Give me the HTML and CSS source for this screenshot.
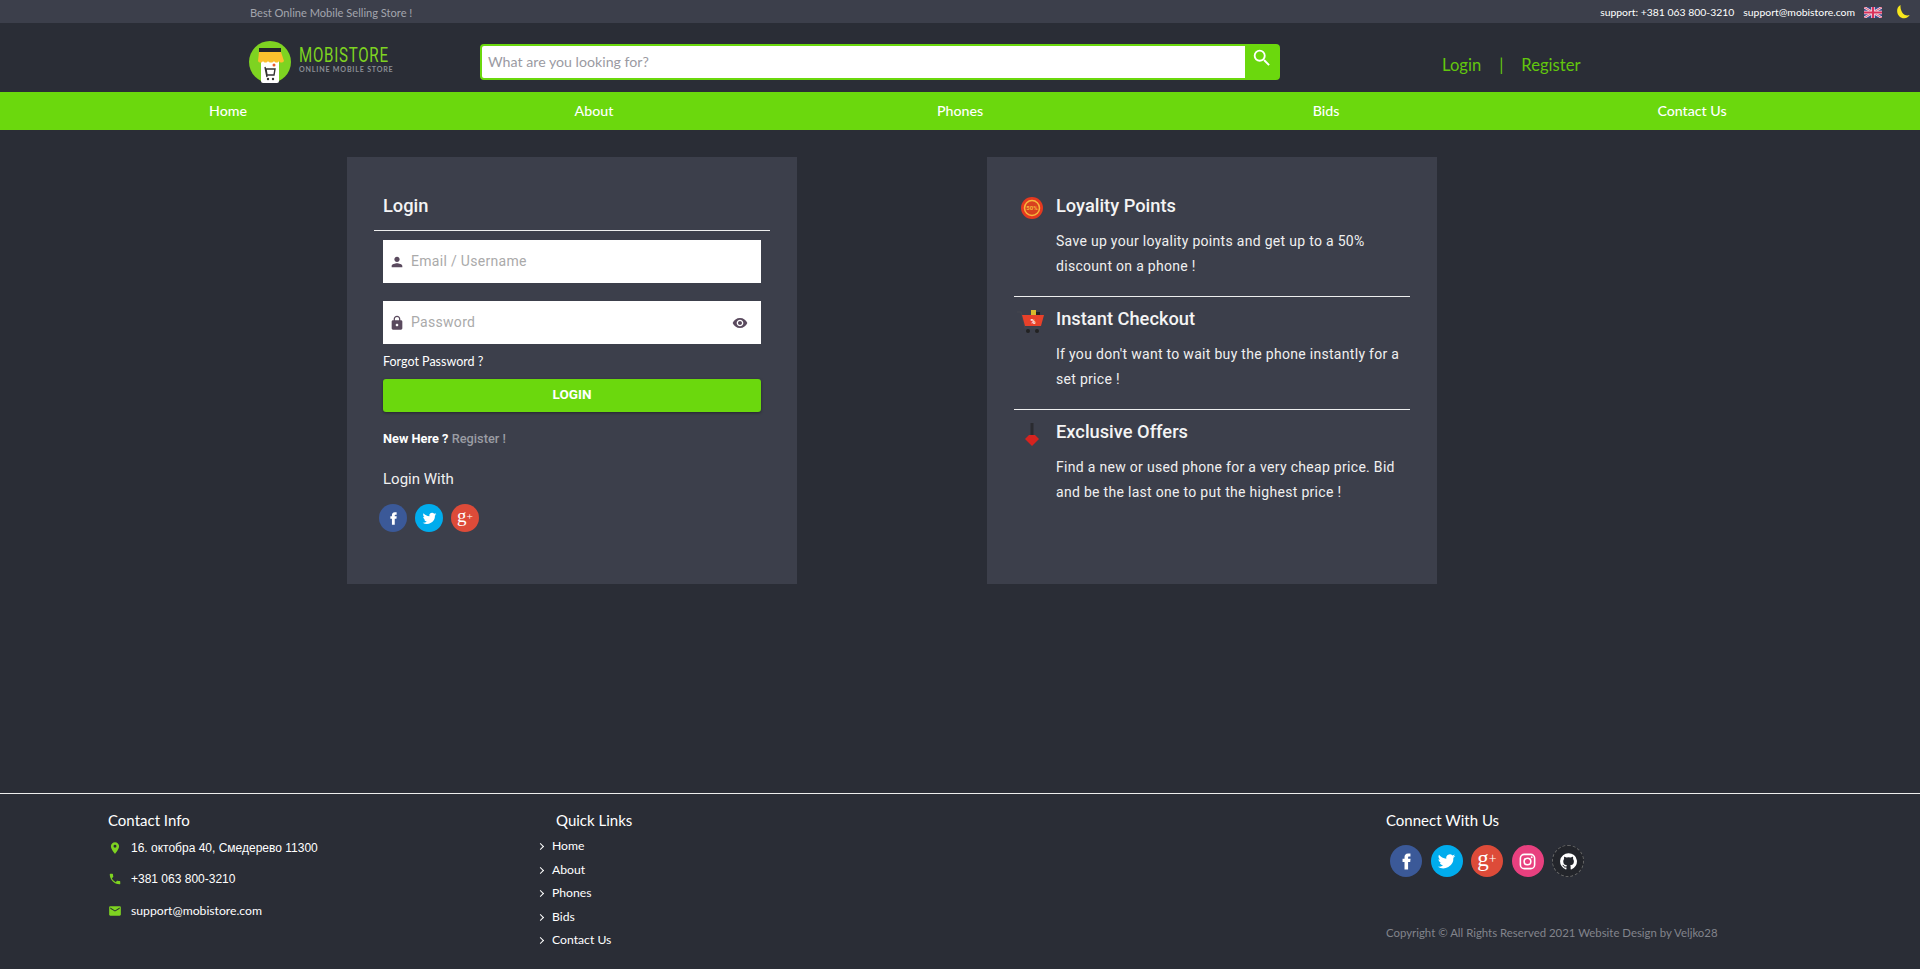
FILE: index.html
```html
<!DOCTYPE html>
<html lang="en">
<head>
    <meta charset="UTF-8">
    <meta name="viewport" content="width=device-width, initial-scale=1.0">
    <title>MobiStore - Login</title>
    <link rel="stylesheet" href="styles.css">
</head>
<body>
    <div class="topbar">
        <span class="topbar-slogan">Best Online Mobile Selling Store !</span>
        <div class="topbar-right">
            <span>support: +381 063 800-3210</span>
            <span>support@mobistore.com</span>
            <svg class="flag" viewBox="0 0 60 36" width="18" height="11">
                <rect width="60" height="36" fill="#3a4a8c"/>
                <path d="M0 0L60 36M60 0L0 36" stroke="#f3dce6" stroke-width="8"/>
                <path d="M0 0L60 36M60 0L0 36" stroke="#d9486b" stroke-width="3"/>
                <path d="M30 0V36M0 18H60" stroke="#f3dce6" stroke-width="12"/>
                <path d="M30 0V36M0 18H60" stroke="#d9305a" stroke-width="7"/>
            </svg>
            <svg class="moon" viewBox="0 0 16 16" width="16" height="16">
                <path d="M5.500 1C3 2.300 1.800 5 2.200 8c.5 3.700 3.600 6.500 7.200 6.300 2.300-.1 4.200-1.300 5.300-3.200-3 1-6-.2-7.500-2.700C5.700 6 5.300 3.300 5.500 1z" fill="#f8e71c"/>
            </svg>
        </div>
    </div>

    <header class="header">
        <a class="logo" href="#">
            <svg class="logo-mark" viewBox="0 0 42 42" width="42" height="42">
                <circle cx="21" cy="21" r="21" fill="#7ed321"/>
                <rect x="12" y="16" width="18" height="26" rx="2" fill="#fff"/>
                <rect x="10" y="7" width="22" height="4" fill="#23232b"/>
                <path d="M10 11h22l3 9c-1.500 2-4 2-5 0-1 2-4 2-5 0-1 2-5 2-6 0-1 2-4 2-5 0-1 2-4 2-5 0z" fill="#fbc02d"/>
                <path d="M17 28h9l-1 6h-7zM16 26l2 10" fill="none" stroke="#333" stroke-width="1.400"/>
                <circle cx="19" cy="38" r="1.200" fill="#333"/>
                <circle cx="24" cy="38" r="1.200" fill="#333"/>
                <circle cx="25" cy="24" r="1.500" fill="#e85c2c"/>
            </svg>
            <div class="logo-text">
                <span class="logo-name">MOBISTORE</span>
                <span class="logo-sub">ONLINE MOBILE STORE</span>
            </div>
        </a>
        <form class="search">
            <input class="search-input" type="text" placeholder="What are you looking for?">
            <button class="search-btn" type="button">
                <svg viewBox="0 0 24 24" width="22" height="22"><path d="M15.500 14h-.790l-.280-.270A6.470 6.470 0 0 0 16 9.500 6.500 6.500 0 1 0 9.500 16c1.610 0 3.090-.590 4.230-1.570l.270.280v.790l5 4.990L20.490 19l-4.990-5zm-6 0C7.010 14 5 11.990 5 9.500S7.010 5 9.500 5 14 7.010 14 9.500 11.990 14 9.500 14z" fill="#fff"/></svg>
            </button>
        </form>
        <div class="auth-links">
            <a href="#">Login</a>
            <span>|</span>
            <a href="#">Register</a>
        </div>
    </header>

    <nav class="nav">
        <a href="#">Home</a>
        <a href="#">About</a>
        <a href="#">Phones</a>
        <a href="#">Bids</a>
        <a href="#">Contact Us</a>
    </nav>

    <main class="main">
        <section class="card">
            <h2 class="card-title login-title">Login</h2>
            <hr class="line">
            <div class="field">
                <svg class="field-icon" viewBox="0 0 24 24"><path d="M12 12c2.210 0 4-1.790 4-4s-1.790-4-4-4-4 1.790-4 4 1.790 4 4 4zm0 2c-2.670 0-8 1.340-8 4v2h16v-2c0-2.660-5.330-4-8-4z"/></svg>
                <input type="text" placeholder="Email / Username">
            </div>
            <div class="field">
                <svg class="field-icon" viewBox="0 0 24 24"><path d="M18 8h-1V6c0-2.760-2.240-5-5-5S7 3.240 7 6v2H6c-1.100 0-2 .9-2 2v10c0 1.100.9 2 2 2h12c1.100 0 2-.9 2-2V10c0-1.100-.9-2-2-2zm-6 9c-1.100 0-2-.9-2-2s.9-2 2-2 2 .9 2 2-.9 2-2 2zm3.100-9H8.900V6c0-1.710 1.390-3.100 3.100-3.100s3.100 1.390 3.100 3.100v2z"/></svg>
                <input type="password" placeholder="Password">
                <svg class="field-icon" viewBox="0 0 24 24"><path d="M12 4.500C7 4.500 2.730 7.610 1 12c1.730 4.390 6 7.500 11 7.500s9.270-3.110 11-7.500c-1.730-4.390-6-7.500-11-7.500zM12 17c-2.760 0-5-2.240-5-5s2.240-5 5-5 5 2.240 5 5-2.240 5-5 5zm0-8c-1.660 0-3 1.340-3 3s1.340 3 3 3 3-1.340 3-3-1.340-3-3-3z"/></svg>
            </div>
            <a class="forgot" href="#">Forgot Password ?</a>
            <button class="login-btn" type="button">LOGIN</button>
            <p class="new-here"><b>New Here ?</b> <a href="#">Register !</a></p>
            <p class="login-with">Login With</p>
            <div class="socials small">
                <a class="fb" href="#"><svg viewBox="0 0 24 24"><path d="M14 8.500V6.800c0-.8.5-1 .9-1H17V2h-3c-3.300 0-4.500 2.400-4.500 4.500v2H7v4h2.500V22H14v-9.500h2.700l.4-4z"/></svg></a>
                <a class="tw" href="#"><svg viewBox="0 0 24 24"><path d="M23 5c-.8.4-1.700.6-2.600.7.900-.6 1.600-1.400 2-2.500-.9.500-1.800.9-2.900 1.100A4.500 4.500 0 0 0 11.800 8.400C8 8.200 4.700 6.400 2.500 3.600c-1.200 2.100-.6 4.700 1.400 6-.7 0-1.400-.2-2-.6 0 2.200 1.500 4 3.600 4.500-.7.200-1.400.2-2 .1.600 1.800 2.200 3.100 4.200 3.100A9.100 9.100 0 0 1 1 18.600 12.800 12.800 0 0 0 20.700 7.200c.9-.6 1.700-1.400 2.300-2.200z"/></svg></a>
                <a class="gp" href="#">g<i>+</i></a>
            </div>
        </section>

        <section class="card">
            <div class="perk">
                <svg class="perk-icon" viewBox="0 0 28 28">
                    <circle cx="13" cy="13" r="11" fill="#e5391f"/>
                    <circle cx="13" cy="13" r="7.500" fill="#d8401f" stroke="#f6b73c" stroke-width="1.500"/>
                    <text x="13" y="15" text-anchor="middle" font-size="6" font-weight="700" fill="#f6b73c" font-family="Roboto, sans-serif">50%</text>
                </svg>
                <div class="perk-body">
                    <h2 class="card-title">Loyality Points</h2>
                    <p>Save up your loyality points and get up to a 50% discount on a phone !</p>
                </div>
            </div>
            <hr class="line">
            <div class="perk">
                <svg class="perk-icon" viewBox="0 0 28 28">
                    <g transform="translate(-2 2)">
                        <path d="M0 2h4l4 16h15" fill="none" stroke="#44464f" stroke-width="1.200"/>
                        <rect x="14" y="0" width="5" height="6" fill="#d8b92c"/>
                        <rect x="19" y="2" width="4" height="4" fill="#222"/>
                        <path d="M5 5h22l-3 11H8z" fill="#e8412a"/>
                        <text x="16" y="14" text-anchor="middle" font-size="7" font-weight="700" fill="#fff" font-family="Roboto, sans-serif">%</text>
                        <circle cx="11" cy="21" r="2" fill="#222"/>
                        <circle cx="20" cy="21" r="2" fill="#222"/>
                    </g>
                </svg>
                <div class="perk-body">
                    <h2 class="card-title">Instant Checkout</h2>
                    <p>If you don't want to wait buy the phone instantly for a set price !</p>
                </div>
            </div>
            <hr class="line">
            <div class="perk">
                <svg class="perk-icon" viewBox="0 0 28 28">
                    <path d="M13 2v12" stroke="#2a2b30" stroke-width="3"/>
                    <path d="M6 18l4-4h6l4 4-7 7z" fill="#d6231f"/>
                </svg>
                <div class="perk-body">
                    <h2 class="card-title">Exclusive Offers</h2>
                    <p>Find a new or used phone for a very cheap price. Bid and be the last one to put the highest price !</p>
                </div>
            </div>
        </section>
    </main>

    <footer class="footer">
        <div class="footer-col contact">
            <h3>Contact Info</h3>
            <div class="contact-row">
                <svg viewBox="0 0 24 24"><path d="M12 2C8.130 2 5 5.130 5 9c0 5.250 7 13 7 13s7-7.750 7-13c0-3.870-3.130-7-7-7zm0 9.500a2.500 2.500 0 1 1 0-5 2.500 2.500 0 0 1 0 5z"/></svg>
                <span class="addr">16. октобра 40, Смедерево 11300</span>
            </div>
            <div class="contact-row">
                <svg viewBox="0 0 24 24"><path d="M6.620 10.790c1.440 2.830 3.760 5.140 6.590 6.590l2.200-2.200c.27-.27.670-.36 1.020-.24 1.120.37 2.330.57 3.570.57.550 0 1 .45 1 1V20c0 .55-.45 1-1 1C10.610 21 3 13.390 3 4c0-.55.450-1 1-1h3.500c.55 0 1 .45 1 1 0 1.250.2 2.450.57 3.570.11.350.03.740-.25 1.020l-2.200 2.200z"/></svg>
                <span class="addr">+381 063 800-3210</span>
            </div>
            <div class="contact-row">
                <svg viewBox="0 0 24 24"><path d="M20 4H4c-1.100 0-2 .9-2 2v12c0 1.100.9 2 2 2h16c1.100 0 2-.9 2-2V6c0-1.100-.9-2-2-2zm0 4l-8 5-8-5V6l8 5 8-5v2z"/></svg>
                <span>support@mobistore.com</span>
            </div>
        </div>
        <div class="footer-col links">
            <h3>Quick Links</h3>
            <ul>
                <li><a href="#">Home</a></li>
                <li><a href="#">About</a></li>
                <li><a href="#">Phones</a></li>
                <li><a href="#">Bids</a></li>
                <li><a href="#">Contact Us</a></li>
            </ul>
        </div>
        <div class="footer-col connect">
            <h3>Connect With Us</h3>
            <div class="socials big">
                <a class="fb" href="#"><svg viewBox="0 0 24 24"><path d="M14 8.500V6.800c0-.8.5-1 .9-1H17V2h-3c-3.300 0-4.500 2.400-4.500 4.500v2H7v4h2.500V22H14v-9.500h2.700l.4-4z"/></svg></a>
                <a class="tw" href="#"><svg viewBox="0 0 24 24"><path d="M23 5c-.8.4-1.700.6-2.600.7.900-.6 1.600-1.400 2-2.500-.9.500-1.800.9-2.900 1.100A4.500 4.500 0 0 0 11.800 8.400C8 8.200 4.700 6.400 2.500 3.600c-1.200 2.100-.6 4.700 1.400 6-.7 0-1.400-.2-2-.6 0 2.200 1.500 4 3.600 4.500-.7.200-1.400.2-2 .1.600 1.800 2.200 3.100 4.200 3.100A9.100 9.100 0 0 1 1 18.600 12.800 12.800 0 0 0 20.700 7.200c.9-.6 1.700-1.400 2.300-2.200z"/></svg></a>
                <a class="gp" href="#">g<i>+</i></a>
                <a class="ig" href="#"><svg viewBox="0 0 24 24"><rect x="3" y="3" width="18" height="18" rx="5" fill="none" stroke="#fff" stroke-width="2"/><circle cx="12" cy="12" r="4.200" fill="none" stroke="#fff" stroke-width="2"/><circle cx="17.300" cy="6.700" r="1.200" fill="#fff"/></svg></a>
                <a class="gh" href="#"><svg viewBox="0 0 24 24"><path d="M12 1.500A10.500 10.500 0 0 0 8.700 22c.5.100.7-.2.700-.5v-1.900c-2.900.6-3.500-1.200-3.500-1.200-.5-1.200-1.200-1.500-1.200-1.500-1-.7.100-.7.100-.7 1 .1 1.600 1.100 1.600 1.100.9 1.600 2.500 1.100 3.100.9.100-.7.400-1.100.7-1.400-2.300-.3-4.800-1.200-4.800-5.200 0-1.100.4-2.100 1.100-2.800-.1-.3-.5-1.300.1-2.800 0 0 .9-.3 2.900 1.100a10 10 0 0 1 5.200 0c2-1.400 2.900-1.100 2.900-1.100.6 1.500.2 2.500.1 2.800.7.700 1.100 1.700 1.100 2.800 0 4-2.500 4.900-4.800 5.200.4.300.7 1 .7 1.900v2.800c0 .3.200.6.700.5A10.500 10.500 0 0 0 12 1.500z"/></svg></a>
            </div>
            <p class="copyright">Copyright © All Rights Reserved 2021 Website Design by Veljko28</p>
        </div>
    </footer>
</body>
</html>
```

FILE: styles.css
```css
* {
    box-sizing: border-box;
}

html, body {
    height: 100%;
}

body {
    margin: 0;
    display: flex;
    flex-direction: column;
    background: #2a2d36;
    color: #fff;
    font-family: "Lato", sans-serif;
}

a {
    color: inherit;
    text-decoration: none;
}

/* top bar */
.topbar {
    flex: none;
    height: 23px;
    padding: 1px 9px 0 250px;
    display: flex;
    justify-content: space-between;
    align-items: center;
    background: #3c3f4b;
    font-size: 11.100px;
}

.topbar-slogan {
    color: #a3a5ad;
}

.topbar-right {
    display: flex;
    align-items: center;
    gap: 9px;
    font-size: 10.400px;
}

.moon {
    margin-left: 4px;
}

/* header */
.header {
    flex: none;
    height: 69px;
    padding: 18px 0 0 249px;
    display: flex;
    align-items: flex-start;
}

.logo {
    width: 231px;
    display: flex;
    gap: 8px;
}

.logo-text {
    display: flex;
    flex-direction: column;
    padding-top: 4px;
}

.logo-name {
    font-family: "Roboto", sans-serif;
    font-size: 21px;
    line-height: 20px;
    letter-spacing: 1px;
    color: #7ed321;
    transform: scaleX(.72);
    transform-origin: left;
}

.logo-sub {
    font-size: 7.100px;
    line-height: 10px;
    font-weight: 700;
    letter-spacing: .8px;
    color: #8b8d95;
}

.search {
    width: 800px;
    height: 36px;
    margin-top: 3px;
    display: flex;
    border: 2px solid #6bd80d;
    border-radius: 4px;
    background: #6bd80d;
}

.search-input {
    flex: 1;
    min-width: 0;
    padding: 0 6px 2px;
    border: none;
    outline: none;
    border-radius: 2px 0 0 2px;
    font-family: "Lato", sans-serif;
    font-size: 14.200px;
}

.search-input::placeholder {
    color: #9a9aa2;
}

.search-btn {
    width: 33px;
    padding: 0 0 5px;
    border: none;
    background: none;
}

.auth-links {
    margin: 14px 0 0 162px;
    display: flex;
    gap: 18px;
    color: #62c60d;
    font-size: 16.600px;
}

/* nav */
.nav {
    flex: none;
    height: 38px;
    padding: 0 45px 2px;
    display: grid;
    grid-template-columns: repeat(5, 1fr);
    align-items: center;
    justify-items: center;
    background: #6bd80d;
    font-size: 14.200px;
    font-weight: 500;
}

/* main cards */
.main {
    flex: 1;
    padding: 27px 0 0 347px;
    display: flex;
    align-items: flex-start;
    gap: 190px;
    font-family: "Roboto", sans-serif;
}

.card {
    width: 450px;
    height: 427px;
    padding: 35px 27px 0;
    background: #3c3f4b;
}

.card-title {
    margin: 0;
    font-size: 18.300px;
    line-height: 28px;
    font-weight: 500;
    color: #f4f4f4;
}

.login-title {
    padding-left: 9px;
}

.line {
    height: 1px;
    margin: 0;
    border: none;
    background: #eee;
}

.login-title + .line {
    margin: 10px 0 9px;
}

.field {
    height: 43px;
    margin: 0 9px 18px;
    padding: 0 13px 0 6px;
    display: flex;
    align-items: center;
    gap: 6px;
    background: #fff;
}

.field input {
    flex: 1;
    min-width: 0;
    padding: 0 0 2px;
    border: none;
    outline: none;
    font-family: "Roboto", sans-serif;
    font-size: 14px;
    letter-spacing: .3px;
}

.field input::placeholder {
    color: #aaa;
}

.field-icon {
    flex: none;
    width: 16px;
    height: 16px;
    fill: #5a4a5e;
}

.forgot {
    display: block;
    margin: -8px 9px 0;
    font-family: "Lato", sans-serif;
    font-size: 12.500px;
    line-height: 16px;
}

.login-btn {
    display: block;
    width: 378px;
    height: 33px;
    margin: 9px 9px 0;
    padding: 0 0 4px;
    border: none;
    border-radius: 3px;
    background: #6bd80d;
    box-shadow: 0 1px 3px rgba(0, 0, 0, .4);
    color: #fff;
    font-family: "Roboto", sans-serif;
    font-size: 13.500px;
    font-weight: 700;
}

.new-here {
    margin: 19px 9px 0;
    font-size: 12.800px;
    line-height: 16px;
}

.new-here a {
    color: #9a9ca3;
    font-weight: 500;
}

.login-with {
    margin: 23px 9px 0;
    font-size: 15px;
    line-height: 18px;
    color: #f0f0f0;
}

/* social icons */
.socials {
    display: flex;
}

.socials a {
    display: flex;
    align-items: center;
    justify-content: center;
    border-radius: 50%;
    color: #fff;
    font-family: "Liberation Serif", serif;
}

.socials svg {
    fill: #fff;
}

.socials.small {
    margin: 16px 0 0 5px;
    gap: 8px;
}

.socials.small a {
    width: 28px;
    height: 28px;
    padding-bottom: 4px;
    font-size: 19px;
}

.socials.small svg {
    width: 15px;
    height: 15px;
    margin-top: 4px;
}

.socials.big {
    margin: 13px 0 0 4px;
    gap: 8.500px;
}

.socials.big a {
    width: 32px;
    height: 32px;
    padding-bottom: 4px;
    font-size: 23px;
}

.socials.big svg {
    width: 19px;
    height: 19px;
    margin-top: 4px;
}

.socials i {
    font-size: .6em;
    font-style: normal;
}

.fb {
    background: #3b5998;
}

.tw {
    background: #00aced;
}

.gp {
    background: #dd4b39;
}

.ig {
    background: #e8407f;
}

.gh {
    background: #23252b;
    border: 1px dashed #666;
}

/* perks */
.perk {
    display: flex;
    height: 104px;
    gap: 9px;
}

.perk + .line {
    margin-bottom: 8px;
}

.perk-icon {
    flex: none;
    width: 28px;
    height: 28px;
    margin: 3px 0 0 5px;
    overflow: visible;
}

.perk-body p {
    margin: 9px 0 0;
    font-size: 14px;
    line-height: 25px;
    letter-spacing: .3px;
    color: #f0f0f0;
}

/* footer */
.footer {
    flex: none;
    height: 176px;
    padding: 14px 0 0 108px;
    display: grid;
    grid-template-columns: 432px 846px auto;
    border-top: 1px solid #eee;
    font-size: 12.200px;
}

.footer h3 {
    margin: 0;
    font-size: 15px;
    line-height: 24px;
    font-weight: 400;
}

.contact-row {
    display: flex;
    align-items: center;
    gap: 9px;
    height: 31.500px;
}

.contact-row svg {
    width: 14px;
    height: 14px;
    fill: #7ed321;
}

.addr {
    font-family: "Liberation Sans", sans-serif;
    font-size: 12px;
}

.links h3 {
    margin: 0 0 2px 16px;
}

.links ul {
    margin: 0;
    padding: 0;
    list-style: none;
}

.links li {
    height: 23.500px;
    padding-left: 12px;
    position: relative;
    line-height: 24px;
}

.links li::before {
    content: "";
    position: absolute;
    left: -2px;
    top: 10px;
    width: 4px;
    height: 4px;
    border-top: 1.500px solid #fff;
    border-right: 1.500px solid #fff;
    transform: rotate(45deg);
}

.copyright {
    margin: 49px 0 0;
    font-size: 11.400px;
    color: #82848c;
}
```
